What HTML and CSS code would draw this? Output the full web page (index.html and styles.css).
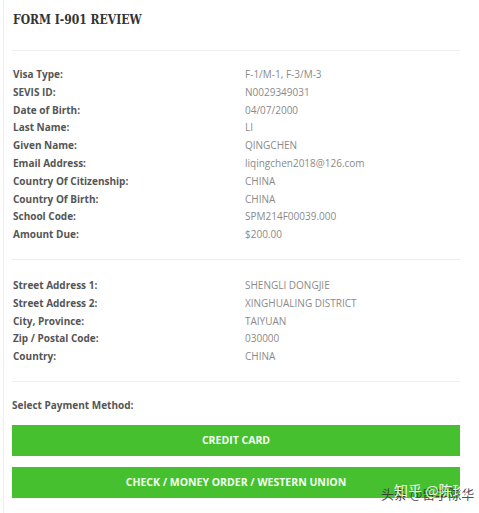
FILE: index.html
```html
<!DOCTYPE html>
<html>
<head>
<meta charset="utf-8">
<link rel="stylesheet" href="styles.css">
</head>
<body>
<div class="page">
  <h1 class="title">FORM I-901 REVIEW</h1>
  <hr class="rule">
  <dl class="info">
    <dt>Visa Type:</dt><dd>F-1/M-1, F-3/M-3</dd>
    <dt>SEVIS ID:</dt><dd>N0029349031</dd>
    <dt>Date of Birth:</dt><dd>04/07/2000</dd>
    <dt>Last Name:</dt><dd>LI</dd>
    <dt>Given Name:</dt><dd>QINGCHEN</dd>
    <dt>Email Address:</dt><dd>liqingchen2018@126.com</dd>
    <dt>Country Of Citizenship:</dt><dd>CHINA</dd>
    <dt>Country Of Birth:</dt><dd>CHINA</dd>
    <dt>School Code:</dt><dd>SPM214F00039.000</dd>
    <dt>Amount Due:</dt><dd>$200.00</dd>
  </dl>
  <hr class="rule">
  <dl class="info info-address">
    <dt>Street Address 1:</dt><dd>SHENGLI DONGJIE</dd>
    <dt>Street Address 2:</dt><dd>XINGHUALING DISTRICT</dd>
    <dt>City, Province:</dt><dd>TAIYUAN</dd>
    <dt>Zip / Postal Code:</dt><dd>030000</dd>
    <dt>Country:</dt><dd>CHINA</dd>
  </dl>
  <hr class="rule">
  <p class="select">Select Payment Method:</p>
  <div class="buttons">
    <button class="btn">CREDIT CARD</button>
    <button class="btn">CHECK / MONEY ORDER / WESTERN UNION</button>
  </div>
  <div class="wm">
    <span class="wm-back">头条 @留学陈华</span>
    <span class="wm-front">知乎 @陈珍</span>
  </div>
</div>
</body>
</html>
```
FILE: styles.css
```css
* { box-sizing: border-box; }
html, body { margin: 0; padding: 0; background: #fff; }
body { font-family: "Open Sans", "Liberation Sans", sans-serif; }
.page {
  position: relative;
  height: 513px;
  margin-left: 3px;
  border-left: 1px solid #eeeeee;
  padding: 10px 19px 0 8px;
  overflow: hidden;
}
.title {
  margin: 0 0 0 1px;
  font-family: "DejaVu Serif", serif;
  font-stretch: condensed;
  font-weight: bold;
  font-size: 12px;
  line-height: 20px;
  color: #333;
}
.rule {
  border: 0;
  border-top: 1px solid #eeeeee;
  margin: 20px 0 0 0;
  height: 0;
}
.info {
  display: grid;
  grid-template-columns: 232px 1fr;
  margin: 15px 0 0 1px;
  font-size: 10px;
  line-height: 17.8px;
}
.info dt { font-weight: bold; color: #555; margin: 0; }
.info dd { margin: 0; color: #8a8a8a; }
.info + .rule { margin-top: 15px; }
.info-address { margin-top: 17px; }
.select {
  margin: 13px 0 0 0;
  font-size: 10px;
  font-weight: bold;
  color: #555;
  line-height: 20px;
}
.buttons {
  display: flex;
  flex-direction: column;
  gap: 11px;
  margin-top: 10px;
}
.btn {
  height: 31px;
  border: 0;
  background: #47c02f;
  color: #f2fff0;
  font-family: "Open Sans", "Liberation Sans", sans-serif;
  font-weight: bold;
  font-size: 10.5px;
  padding: 0;
}
.wm {
  position: absolute;
  left: 377px;
  top: 484px;
  font-family: "Noto Sans CJK SC", sans-serif;
  font-size: 13px;
}
.wm-back { position: absolute; left: 0; top: 0; white-space: nowrap; color: #333; opacity: 0.85; }
.wm-front { position: absolute; left: 13px; top: -4px; white-space: nowrap; color: #fff; opacity: 0.9; font-size: 14px; }
```
